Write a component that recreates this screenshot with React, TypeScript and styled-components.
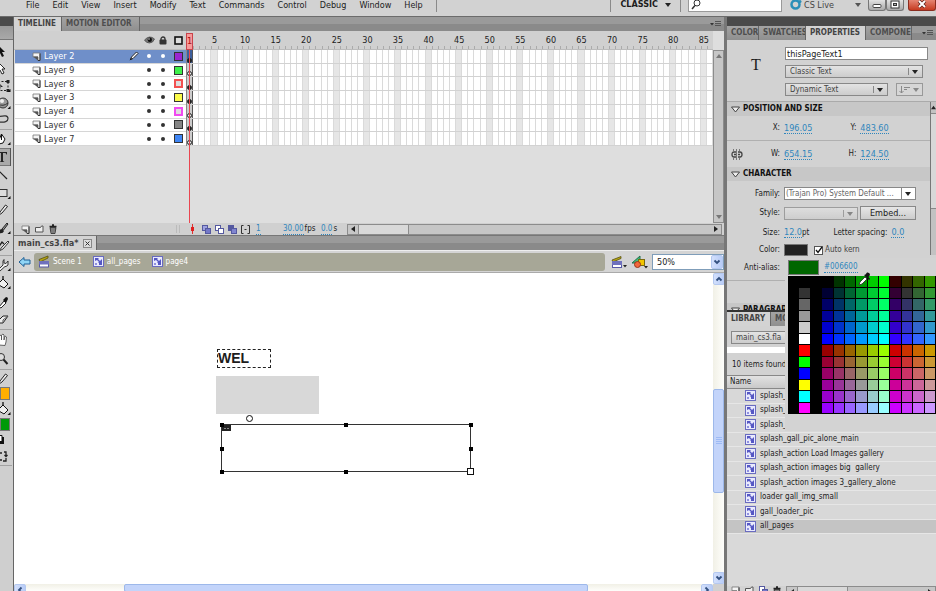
import React from "react";
import styled, { createGlobalStyle, css } from "styled-components";

const Global = createGlobalStyle`
  * { box-sizing: border-box; }
  body { margin: 0; overflow: hidden; background: #d0d0d0; }
  body, button, input, select, table {
    font: 9px/12px "DejaVu Sans Condensed", "DejaVu Sans", sans-serif;
    color: #1c1c1c;
  }
  button { padding: 0; border: 0; background: none; }
  svg { display: block; flex: none; }
`;

const Shell = styled.div`
  height: 100vh;
  display: flex;
  flex-direction: column;
  overflow: hidden;
  background: #d0d0d0;
`;

/* ---------- menu bar ---------- */
const MenuBar = styled.header`
  display: flex;
  flex: none;
  height: 17px;
  padding-left: 26px;
  background: #d2d2d2;
  border-bottom: 1px solid #6c6c6c;
  align-items: flex-start;
`;
const MenuItems = styled.nav`
  display: flex;
  flex: 1;
  gap: 13px;
`;
const MenuItem = styled.button`
  line-height: 11px;
  height: 11px;
`;
const Divider = styled.span`
  width: 1px;
  height: 12px;
  background: #8a8a8a;
`;
const Workspace = styled.button`
  display: flex;
  align-items: center;
  gap: 7px;
  height: 9px;
  padding: 0 9px;
  font-weight: bold;
  line-height: 9px;
`;
const SearchBox = styled.label`
  display: flex;
  width: 94px;
  height: 12px;
  margin: 0 8px 0 7px;
  padding-left: 2px;
  background: #fff;
  border: 1px solid #9a9a9a;
  border-top: 0;
  input { min-width: 0; flex: 1; border: 0; outline: 0; background: none; padding: 0; }
`;
const CsLive = styled.button`
  display: flex;
  align-items: center;
  gap: 2px;
  height: 10px;
  width: 78px;
  line-height: 10px;
  color: #444;
  svg:last-child { margin-left: auto; margin-right: 7px; }
`;
const WindowButtons = styled.div`
  display: flex;
`;
const WindowButton = styled.button<{ $close?: boolean }>`
  width: ${(p) => (p.$close ? 28 : 18)}px;
  height: 11px;
  display: flex;
  justify-content: center;
  border: 1px solid ${(p) => (p.$close ? "#8b2d20" : "#777")};
  border-top: 0;
  border-radius: 0 0 3px 3px;
  background: ${(p) => (p.$close ? "linear-gradient(#e58573, #c63a20)" : "linear-gradient(#e2e2e2, #a9a9a9)")};
  margin-left: ${(p) => (p.$close ? 4 : 0)}px;
`;

/* ---------- page columns ---------- */
const Columns = styled.div`
  flex: 1;
  min-height: 0;
  display: grid;
  grid-template-columns: 13px minmax(0, 1fr) 210px;
`;

const ToolStrip = styled.aside`
  background: #cfcfcf;
  overflow: hidden;
`;
const StripTop = styled.div`
  height: 26px;
  background: linear-gradient(#4a4a4a 0 9px, #999 9px 10px, #a9a9a9 22px, #777 22px 23px, #cfcfcf 23px);
`;
const ToolGroup = styled.div<{ $h: number }>`
  height: ${(p) => p.$h}px;
  display: flex;
  flex-direction: column;
  border-bottom: 1px solid #a2a2a2;
  margin-right: 1px;
`;
const Tool = styled.button<{ $on?: boolean }>`
  flex: 1;
  min-height: 0;
  width: 11px;
  display: flex;
  align-items: center;
  ${(p) => p.$on && css`background: #a9a9a9; box-shadow: inset -1px 0 #555, inset 0 1px #777, inset 0 -1px #777;`}
`;
const Swatch = styled.button<{ $c: string; $w?: number; $h?: number }>`
  flex: none;
  width: ${(p) => p.$w ?? 10}px;
  height: ${(p) => p.$h ?? 13}px;
  background: ${(p) => p.$c};
  border: 1px solid #777;
`;

const Center = styled.main`
  display: flex;
  flex-direction: column;
  min-width: 0;
  min-height: 0;
  border-left: 1px solid #666;
  border-right: 2px solid #777;
`;

const TabBar = styled.div`
  display: flex;
  flex: none;
  height: 14px;
  background: linear-gradient(#9a9a9a 0 50%, #8a8a8a 50%);
  overflow: hidden;
`;
const Tab = styled.button<{ $on?: boolean; $w?: number; $doc?: boolean }>`
  flex: none;
  ${(p) => p.$w && css`width: ${p.$w}px;`}
  padding: 0 4px;
  overflow: hidden;
  white-space: nowrap;
  text-align: left;
  font-size: ${(p) => (p.$doc ? 9 : 8)}px;
  font-weight: bold;
  color: ${(p) => (p.$on ? "#444" : "#4e4e4e")};
  background: ${(p) => (p.$on ? "#d3d3d3" : "linear-gradient(#a3a3a3, #8f8f8f)")};
  border-right: 1px solid #666;
  display: ${(p) => (p.$doc ? "flex" : "block")};
  align-items: center;
  gap: 4px;
`;
const TabMenu = styled.button`
  margin-left: auto;
  width: 14px;
  display: flex;
  align-items: center;
`;

/* ---------- timeline ---------- */
const Timeline = styled.section`
  position: relative;
  flex: none;
  height: 192px;
  display: grid;
  grid-template: 19px 173px / 172px minmax(0, 1fr) 11px;
  background: #dedede;
`;
const layerColumns = css`
  display: grid;
  grid-template-columns: 13px 1fr 16px 14px 14px 16px;
  align-items: center;
  padding-left: 17px;
`;
const LayerHead = styled.div`
  ${layerColumns}
  background: #d0d0d0;
  border-bottom: 1px solid #bbb;
  svg { justify-self: center; }
`;
const LayerList = styled.div`
  display: grid;
  grid-template-rows: repeat(7, minmax(0, 1fr));
  height: 96px;
  margin-left: 1px;
  background: #fff;
`;
const LayerRow = styled.div<{ $on?: boolean }>`
  ${layerColumns}
  padding-left: 15px;
  border-bottom: 1px solid #d6d6d6;
  background: ${(p) => (p.$on ? "#6f8fc9" : "#fff")};
  color: ${(p) => (p.$on ? "#fff" : "#333")};
  > * { justify-self: center; }
  > :nth-child(2) { justify-self: start; line-height: 10px; padding-left: 1px; }
`;
const Dot = styled.i`
  width: 4px;
  height: 4px;
  border-radius: 50%;
  background: currentColor;
`;
const LayerColor = styled.button<{ $c: string; $outline?: boolean }>`
  width: 9px;
  height: 9px;
  border: ${(p) => (p.$outline ? `2px solid ${p.$c}` : "1px solid #333")};
  background: ${(p) => (p.$outline ? "#ddd" : p.$c)};
`;
const Ruler = styled.div`
  display: grid;
  grid-template-columns: repeat(86, minmax(0, 1fr));
  background: #d0d0d0;
  border-bottom: 1px solid #bbb;
  border-left: 1px solid #bbb;
  span {
    display: flex;
    justify-content: center;
    white-space: nowrap;
    line-height: 18px;
    background: linear-gradient(#aaa, #aaa) left bottom / 1px 3px no-repeat;
  }
`;
const Frames = styled.div`
  display: grid;
  grid-template-rows: repeat(7, minmax(0, 1fr));
  height: 96px;
  border-left: 1px solid #888;
`;
const FrameRow = styled.div`
  display: grid;
  grid-template-columns: repeat(86, minmax(0, 1fr));
  border-bottom: 1px solid #d2d2d2;
`;
const Frame = styled.i<{ $shade?: boolean; $key?: boolean; $sel?: boolean }>`
  display: flex;
  flex-direction: column;
  align-items: center;
  justify-content: flex-end;
  background: ${(p) => (p.$sel ? "#3e5f9c" : p.$key ? "#ccc" : p.$shade ? "#e6e6e6" : "#fff")};
  border-right: 1px solid ${(p) => (p.$key ? "#555" : "#dadada")};
`;
const KeyDot = styled.b<{ $fill?: boolean }>`
  width: 5px;
  height: 5px;
  border-radius: 50%;
  border: 1px solid #222;
  background: ${(p) => (p.$fill ? "#222" : "#eee")};
`;
const Playhead = styled.div`
  position: absolute;
  left: 172px;
  top: 2px;
  bottom: 0;
  width: 7px;
  display: flex;
  flex-direction: column;
  align-items: center;
  span {
    align-self: stretch;
    height: 17px;
    line-height: 14px;
    text-align: center;
    background: #f79a9a;
    border: 1px solid #c9434b;
    color: #a11;
  }
  i {
    flex: 1;
    width: 1px;
    background: #ea4650;
  }
`;
const GreyScroll = styled.div<{ $row?: boolean }>`
  display: flex;
  flex-direction: ${(p) => (p.$row ? "row" : "column")};
  justify-content: space-between;
  align-items: center;
  background: #c6c6c6;
  border: 1px solid #8c8c8c;
  button { display: flex; width: 10px; height: 10px; align-items: center; justify-content: center; }
`;
const GreyThumb = styled.div`
  width: 51px;
  height: 100%;
  margin-right: auto;
  background: #d9d9d9;
  border: solid #8c8c8c;
  border-width: 0 1px;
`;
const TimelineFoot = styled.div`
  flex: none;
  height: 13px;
  display: flex;
  align-items: center;
  padding: 0 2px 0 7px;
  font-size: 8px;
  background: #d0d0d0;
  border-bottom: 1px solid #777;
  ${GreyScroll} { flex: 1; height: 11px; }
`;
const FootGroup = styled.div<{ $w: number; $gap?: number }>`
  display: flex;
  align-items: center;
  flex: none;
  width: ${(p) => p.$w}px;
  gap: ${(p) => p.$gap ?? 5}px;
`;
const Hot = styled.a`
  color: #2f86bd;
  text-decoration: none;
  border-bottom: 1px dotted #2f86bd;
  line-height: 10px;
`;

/* ---------- document ---------- */
const EditBar = styled.div`
  flex: none;
  height: 23px;
  display: flex;
  align-items: center;
  gap: 3px;
  padding: 0 0 0 4px;
  background: #d4d4d4;
  border-top: 1px solid #eee;
  border-bottom: 1px solid #aaa;
`;
const Crumbs = styled.nav`
  flex: 1;
  height: 18px;
  display: flex;
  align-items: center;
  gap: 11px;
  padding-left: 4px;
  margin-right: 3px;
  border-radius: 3px;
  font-size: 8px;
  background: #a7a797;
`;
const Crumb = styled.a`
  display: flex;
  align-items: center;
  gap: 3px;
  color: #fff;
  text-decoration: none;
`;
const ZoomWrap = styled.div`
  position: relative;
  width: 72px;
  height: 16px;
  border: 1px solid #7f9db9;
  background: #fff;
  select { width: 100%; height: 14px; border: 0; padding: 0 4px; background: none; appearance: none; outline: 0; }
`;
const xpButton = css`
  display: flex;
  align-items: center;
  justify-content: center;
  background: linear-gradient(90deg, #d3e0fc, #b7cbf6);
  border: 1px solid #b4c8f0;
  border-radius: 2px;
`;
const ZoomArrow = styled.span`
  ${xpButton}
  position: absolute;
  right: 0;
  top: 0;
  width: 12px;
  height: 14px;
  pointer-events: none;
`;
const Stage = styled.div`
  flex: 1;
  min-height: 0;
  display: grid;
  grid-template: minmax(0, 1fr) 7px / minmax(0, 1fr) 11px;
`;
const Canvas = styled.div`
  position: relative;
  background: #fff;
  overflow: hidden;
`;
const TextBox = styled.div`
  position: absolute;
  left: 203px;
  top: 76px;
  width: 54px;
  height: 19px;
  border: 1px dashed #222;
  font: bold 14px/17px "Liberation Sans", sans-serif;
`;
const GreyBlock = styled.div`
  position: absolute;
  left: 202px;
  top: 103px;
  width: 103px;
  height: 38px;
  background: #d8d8d8;
`;
const Selection = styled.svg`
  position: absolute;
  left: 200px;
  top: 139px;
`;
const XpScroll = styled.div<{ $row?: boolean }>`
  display: flex;
  flex-direction: ${(p) => (p.$row ? "row" : "column")};
  background: linear-gradient(${(p) => (p.$row ? "180deg" : "90deg")}, #f1f0e6, #fefefb);
  overflow: hidden;
`;
const XpArrow = styled.button`
  ${xpButton}
  flex: none;
  width: 12px;
  height: 12px;
`;
const XpTrack = styled.div<{ $grow: number }>`
  flex: ${(p) => p.$grow};
`;
const XpThumb = styled.div<{ $grow: number }>`
  flex: ${(p) => p.$grow};
  min-height: 8px;
  background: #c3d4fa;
  border: 1px solid #9db8ea;
  border-radius: 2px;
  display: flex;
  align-items: center;
  justify-content: center;
`;

/* ---------- right panels ---------- */
const Right = styled.aside`
  position: relative;
  display: flex;
  flex-direction: column;
  min-height: 0;
  overflow: hidden;
  background: #d2d2d2;
  border-left: 1px solid #777;
`;
const DarkStrip = styled.div`
  flex: none;
  height: 9px;
  background: #4a4a4a;
`;
const Properties = styled.section`
  flex: none;
  height: 270px;
  display: flex;
  flex-direction: column;
  overflow: hidden;
`;
const Instance = styled.div`
  flex: none;
  height: 62px;
  display: flex;
  padding: 7px 8px 0 24px;
  border-bottom: 1px solid #aaa;
`;
const TypeMark = styled.span`
  width: 34px;
  padding-top: 10px;
  font: 16px/16px "Liberation Serif", serif;
`;
const Stack = styled.div`
  flex: 1;
  display: flex;
  flex-direction: column;
  gap: 5px;
`;
const Line = styled.div`
  display: flex;
  gap: 8px;
`;
const Field = styled.input`
  width: 100%;
  height: 13px;
  padding: 0 1px;
  border: 1px solid #888;
  background: #fff;
  outline: 0;
`;
const SelectBox = styled.span<{ $w: number; $white?: boolean; $dim?: boolean }>`
  position: relative;
  display: block;
  flex: none;
  width: ${(p) => p.$w}px;
  height: 13px;
  border: 1px solid #888;
  background: ${(p) => (p.$white ? "#fff" : "linear-gradient(#e3e3e3, #cccccc)")};
  opacity: ${(p) => (p.$dim ? 0.7 : 1)};
  select {
    display: block;
    width: 100%;
    height: 11px;
    padding: 0 13px 0 4px;
    border: 0;
    outline: 0;
    background: none;
    appearance: none;
    font-size: 8px;
    line-height: 11px;
    color: #444;
    ${(p) => p.$white && css`padding-left: 1px; color: #666;`}
  }
  svg {
    position: absolute;
    right: 4px;
    top: 3px;
    pointer-events: none;
  }
  &::after {
    content: "";
    position: absolute;
    right: 13px;
    top: ${(p) => (p.$white ? 0 : 2)}px;
    bottom: ${(p) => (p.$white ? 0 : 2)}px;
    border-left: 1px solid #888;
  }
`;
const Orientation = styled.button`
  display: flex;
  align-items: center;
  justify-content: space-between;
  width: 27px;
  height: 13px;
  padding: 0 3px 0 2px;
  border: 1px solid #999;
  background: #d6d6d6;
`;
const Scroller = styled.div`
  flex: 1;
  min-height: 0;
  display: grid;
  grid-template-columns: minmax(0, 1fr) 6px;
`;
const Sections = styled.div`
  display: flex;
  flex-direction: column;
  overflow: hidden;
  font-size: 8px;
  ${Hot} { font-size: 9px; }
`;
const SectionHead = styled.button`
  flex: none;
  height: 14px;
  display: flex;
  align-items: center;
  gap: 3px;
  padding-left: 4px;
  background: #c7c7c7;
  font-size: 8px;
  font-weight: bold;
  color: #111;
`;
const Row = styled.div<{ $h: number; $line?: boolean }>`
  flex: none;
  height: ${(p) => p.$h}px;
  display: flex;
  align-items: center;
  border-bottom: ${(p) => (p.$line ? 1 : 0)}px solid #b0b0b0;
`;
const Label = styled.label<{ $w: number }>`
  width: ${(p) => p.$w}px;
  flex: none;
  display: flex;
  justify-content: flex-end;
  align-items: center;
  padding-right: 4px;
  white-space: nowrap;
  svg { margin: 0 auto 0 4px; }
`;
const Embed = styled.button`
  width: 56px;
  height: 14px;
  margin-left: 2px;
  border: 1px solid #888;
  background: linear-gradient(#e6e6e6, #ccc);
`;
const Check = styled.label`
  display: flex;
  align-items: center;
  gap: 2px;
  margin-left: 6px;
  position: relative;
  input {
    appearance: none;
    width: 9px;
    height: 9px;
    margin: 0;
    border: 1px solid #555;
    background: #fff;
  }
  span { color: #444; }
  svg { position: absolute; left: 1px; top: 2px; }
`;
const SideScroll = styled.div`
  height: 153px;
  border-left: 1px solid #777;
  display: flex;
  flex-direction: column;
  align-items: center;
  background: #c2c2c2;
  button { height: 11px; display: flex; align-items: center; }
  div { width: 100%; height: 96px; background: #d8d8d8; border: solid #888; border-width: 1px 0; }
`;
const Library = styled.section`
  flex: 1;
  min-height: 0;
  display: flex;
  flex-direction: column;
  overflow: hidden;
  border-top: 2px solid #333;
  background: #d9d9d9;
`;
const LibTop = styled.div`
  flex: none;
  padding: 5px 0 0 4px;
  height: 21px;
  background: #d2d2d2;
`;
const LibSearch = styled.input`
  flex: none;
  height: 6px;
  border: 0;
  padding: 0;
  background: #fff;
  outline: 0;
`;
const Count = styled.div`
  flex: none;
  height: 22px;
  padding: 6px 5px;
  font-size: 8px;
  background: #d2d2d2;
`;
const Items = styled.table`
  flex: none;
  height: 159px;
  width: 100%;
  display: grid;
  grid-template-rows: 14px 145px;
  font-size: 8px;
  thead, thead tr { display: grid; }
  th {
    text-align: left;
    font-weight: normal;
    padding: 0 3px;
    background: linear-gradient(#e2e2e2, #c9c9c9);
    border: solid #888;
    border-width: 1px 0;
  }
  tbody { display: grid; grid-template-rows: repeat(10, minmax(0, 1fr)); }
`;
const Item = styled.tr<{ $on?: boolean }>`
  display: grid;
  background: ${(p) => (p.$on ? "#c4c4c4" : "#d8d8d8")};
  border-bottom: 1px solid #e6e6e6;
  td {
    display: flex;
    align-items: center;
    gap: 4px;
    padding: 0 0 0 18px;
    white-space: pre;
  }
`;
const LibFoot = styled.div`
  margin-top: auto;
  height: 5px;
  flex: none;
  display: flex;
  gap: 5px;
  padding-left: 4px;
  background: #d2d2d2;
  overflow: hidden;
  ${GreyScroll} { flex: 1; height: 11px; }
`;

const Popup = styled.div`
  position: absolute;
  right: 0;
  top: 241px;
  width: 151px;
  height: 173px;
  padding: 1px 0 0 3px;
  background: #d3d3d3;
`;
const PopupHead = styled.div`
  display: flex;
  align-items: center;
  gap: 5px;
  height: 17px;
  font-size: 8px;
`;
const Palette = styled.div`
  display: grid;
  grid-template-columns: repeat(13, minmax(0, 1fr));
  grid-template-rows: repeat(12, minmax(0, 1fr));
  height: 138px;
  background: #000;
`;
const Chip = styled.button<{ $c: string }>`
  background: ${(p) => p.$c};
  border: solid #000;
  border-width: 0 1px 1px 0;
`;
const Dropper = styled.svg`
  position: absolute;
  left: 72px;
  top: 13px;
`;

/* ---------- drawings ---------- */
const Tri = ({ c = "#222", d = "down", s = 6 }: { c?: string; d?: "down" | "up" | "left" | "right"; s?: number }) => {
  const pts = { down: "0,1 6,1 3,5", up: "0,5 6,5 3,1", left: "5,0 5,6 1,3", right: "1,0 1,6 5,3" }[d];
  return <svg width={s} height={s} viewBox="0 0 6 6"><polygon points={pts} fill={c} /></svg>;
};
const Chevron = ({ d = "M1.5 2.5 4 5 6.5 2.5" }: { d?: string }) => (
  <svg width="8" height="8" viewBox="0 0 8 8"><path d={d} fill="none" stroke="#33507f" strokeWidth="1.8" /></svg>
);
const UP = "M1.5 5.5 4 3 6.5 5.5";
const LEFT = "M5.5 1.5 3 4 5.5 6.5";
const RIGHT = "M2.5 1.5 5 4 2.5 6.5";
const MenuLines = () => (
  <svg width="12" height="8" viewBox="0 0 12 8"><path d="M0 3h4L2 5.500z" fill="#333" /><path d="M5 1.500h6M5 3.500h6M5 5.500h6" stroke="#555" /></svg>
);
const Twisty = () => (
  <svg width="9" height="7" viewBox="0 0 9 7"><path d="M.5 1h8L4.500 6z" fill="#eee" stroke="#444" /></svg>
);
const Clip = () => (
  <svg width="11" height="11" viewBox="0 0 11 11">
    <rect x=".5" y=".5" width="10" height="10" fill="#e9eafd" stroke="#6a6cc0" />
    <path d="M2 2h4l-1 1 2 2 2-2v4H5l1-1-2-2-2 1z" fill="#5557c4" />
    <rect x="6" y="7" width="3" height="2" fill="#5557c4" /><rect x="2" y="7" width="2" height="2" fill="#8f91e0" />
  </svg>
);
const Clapper = () => (
  <svg width="12" height="13" viewBox="0 0 12 13">
    <path d="M1 4.500 10 1v2L2 7z" fill="#b5a512" stroke="#574f10" strokeWidth=".8" />
    <rect x="1.500" y="6.500" width="9" height="5.500" fill="#fff" stroke="#5759a8" />
    <path d="M1 6h10v3.500H1z" fill="#6f71bd" />
  </svg>
);
const LayerIcon = () => (
  <svg width="9" height="9" viewBox="0 0 9 9">
    <path d="M1 1h7v7.500H6V5H1z" fill="#f4f4f4" stroke="#777" strokeWidth=".8" />
    <path d="M1 4.500h5v4z" fill="#555" />
    <path d="M8 1.500v7H6" fill="none" stroke="#333" />
  </svg>
);
const PencilIcon = () => (
  <svg width="10" height="10" viewBox="0 0 10 10"><path d="M1.500 8.500 2.500 6 7.500 1 9 2.500 4 7.500z" fill="#fff" stroke="#222" /><path d="M.5 9.500 3 8 2 7z" fill="#111" /></svg>
);
const Eye = () => (
  <svg width="11" height="8" viewBox="0 0 11 8"><path d="M.5 4Q5.500-1.500 10.500 3 9 7 5.500 7T.5 4z" fill="#777" stroke="#444" strokeWidth=".7" /><circle cx="5.800" cy="3.800" r="2.200" fill="#111" /><circle cx="5" cy="3" r=".7" fill="#fff" /></svg>
);
const Lock = () => (
  <svg width="8" height="9" viewBox="0 0 8 9"><path d="M2 4V3a2 2 0 0 1 4 0v1" fill="none" stroke="#333" strokeWidth="1.300" /><rect x=".5" y="3.500" width="7" height="5" rx="1" fill="#333" /></svg>
);
const Box = () => <svg width="9" height="9" viewBox="0 0 9 9"><rect x="1" y="1" width="7" height="7" fill="#ddd" stroke="#111" strokeWidth="1.600" /></svg>;
const Onion = ({ a, b }: { a: string; b: string }) => (
  <svg width="9" height="9" viewBox="0 0 9 9"><rect x=".5" y=".5" width="5" height="5" fill={a} stroke="#5559a0" /><rect x="3.500" y="3.500" width="5" height="5" fill={b} stroke="#5559a0" /></svg>
);
const Trash = () => (
  <svg width="8" height="10" viewBox="0 0 8 10"><path d="M.5 2.500h7M3 1h2" stroke="#222" strokeWidth="1.400" /><path d="M1 3.500h6L6 9.500H2z" fill="#555" stroke="#222" strokeWidth=".7" /><path d="M3 4v5M5 4v5" stroke="#ddd" strokeWidth=".6" /></svg>
);
const Folder = () => <svg width="9" height="8" viewBox="0 0 9 8"><path d="M.5 7V2.500h5l1-1.500H8V7z" fill="#eee" stroke="#555" /></svg>;

const toolArt: Record<string, React.ReactNode> = {
  arrow: <path d="M-2 1 5 8H2l2 4-2 1-2-4-2 2z" fill="#111" />,
  subarrow: <path d="M-2 1 5 8H2l2 4-2 1-2-4-2 2z" fill="#fff" stroke="#111" strokeWidth=".9" />,
  transform: <><path d="M-2 3.500H8v9H-2" fill="none" stroke="#222" strokeDasharray="2 1.500" /><path d="M6.500 2h3v3h-3zM6.500 11h3v3h-3zM0 6l3 3H1v3" fill="#222" /></>,
  sphere: <><circle cx="3" cy="8" r="5" fill="#999" stroke="#333" /><circle cx="2" cy="6" r="2" fill="#eee" /><path d="M-2 9q5 3 10-1" stroke="#333" fill="none" /></>,
  lasso: <path d="M-2 5Q8 2 8 6.500T-1 10l-1 3" fill="none" stroke="#333" strokeWidth="1.200" />,
  pen: <><path d="M-1 13V9l2.500-6L5 8l-2 4z" fill="#fff" stroke="#111" /><path d="M1.500 3v6" stroke="#111" /></>,
  line: <path d="M-2 3 7 12" stroke="#222" strokeWidth="1.200" />,
  rect: <rect x="-2" y="4.500" width="9" height="7" fill="#ddd" stroke="#333" />,
  pencil: <path d="M-1 13 0 10 5.500 3 7.500 4.500 2 11z" fill="#eee" stroke="#222" />,
  brush: <><path d="M2 9 7 3l1 1-4.500 6z" fill="#999" stroke="#222" /><path d="M-1 13q0-4 3-4l2 2q-1 3-5 2z" fill="#222" /></>,
  deco: <><path d="M-1 13 2 9 8 3l1 1-6 7z" fill="#eee" stroke="#222" strokeWidth=".9" /><path d="M-2 5l2 2 2-3 2 2" stroke="#222" fill="none" strokeWidth="1.400" /></>,
  bone: <path d="M-2 13 3 8V4l1-1.500V6l2 .5L8 4v4L6 9.500H5L0 14z" fill="#eee" stroke="#333" />,
  bucket: <><path d="M-1 8 3 4l5 5-4 4-5-3z" fill="#eee" stroke="#111" /><path d="M3 4V1M-2 8v5" stroke="#111" strokeWidth="1.300" /></>,
  dropper: <><path d="M-1 13 4 7l2 2-5 5z" fill="#fff" stroke="#222" /><path d="m3 6 3-3q2 0 2 2L6 9z" fill="#111" /></>,
  eraser: <><path d="M-2 9 3 4h5L3 11h-5z" fill="#eee" stroke="#222" /><path d="M3 11v-3l5-4" fill="none" stroke="#555" /></>,
  hand: <path d="M-1 13V5l1-2 1.500 1V8 3l1.500-1 1 1v5l1-4 1.500 1L6 10l-1 3.500z" fill="#fff" stroke="#555" strokeWidth=".9" />,
  zoom: <><circle cx="1" cy="6" r="3.500" fill="#ddd" stroke="#333" /><path d="m3.500 8.500 4 4.500" stroke="#222" strokeWidth="2" /></>,
  bw: <><path d="M-1 6h5v7h-5z" fill="#111" /><path d="M-2 4.500h4v6h-4z" fill="#fff" stroke="#111" /></>,
  swap: <path d="M-1 5h3M-1 9v3h3M4 4h2v4M6 10v3H3M4.500 7 6 8.500 7.500 7" fill="none" stroke="#222" strokeWidth="1.300" />,
};
const flyout = ["sphere", "transform", "pen", "rect", "brush", "bone", "bucket"];
const ToolButton = ({ id }: { id: string }) => (
  <Tool aria-label={id} $on={id === "type"}>
    <svg width="11" height="16" viewBox="0 0 11 16">
      {id === "type" ? <path d="M-3 3H7v3L5.500 4H3v8l1.500 1h-5L1 12V4h-2z" fill="#222" /> : toolArt[id]}
      {flyout.includes(id) && <path d="M10.500 11v3h-3z" fill="#111" />}
    </svg>
  </Tool>
);

/* ---------- data ---------- */
const menus = ["File", "Edit", "View", "Insert", "Modify", "Text", "Commands", "Control", "Debug", "Window", "Help"];
const layers = [
  { name: "Layer 2", color: "#9a26d0", fill: true, on: true },
  { name: "Layer 9", color: "#3df04a", fill: false },
  { name: "Layer 8", color: "#f25050", fill: true, outline: true },
  { name: "Layer 3", color: "#fbfb4a", fill: true },
  { name: "Layer 4", color: "#f04af0", fill: false, outline: true },
  { name: "Layer 6", color: "#858585", fill: true },
  { name: "Layer 7", color: "#3f86f5", fill: false },
];
const frames = Array.from({ length: 86 }, (_, i) => i + 1);
const items = [
  "splash_", "splash_", "splash_", "splash_gall_pic_alone_main", "splash_action Load Images gallery",
  "splash_action images big  gallery", "splash_action images 3_gallery_alone", "loader gall_img_small",
  "gall_loader_pic", "all_pages",
];
const greys = ["#000000", "#333333", "#666666", "#999999", "#cccccc", "#ffffff", "#ff0000", "#00ff00", "#0000ff", "#ffff00", "#00ffff", "#ff00ff"];
const steps = ["00", "33", "66", "99", "cc", "ff"];
const chips = greys.flatMap((grey, r) => [
  "#000000", grey, "#000000",
  ...Array.from({ length: 10 }, (_, c) => `#${steps[(r > 5 ? 3 : 0) + (c > 5 ? 1 : 0)]}${steps[c % 6]}${steps[r % 6]}`),
]);

const Drop = ({ label, value, w, white, dim }: { label: string; value: string; w: number; white?: boolean; dim?: boolean }) => (
  <SelectBox $w={w} $white={white} $dim={dim}>
    <select aria-label={label} defaultValue={value}><option>{value}</option></select>
    <Tri c={dim ? "#666" : "#222"} />
  </SelectBox>
);

export default function App() {
  return (
    <Shell>
      <Global />
      <MenuBar>
        <MenuItems>
          {menus.map((m) => <MenuItem key={m}>{m}</MenuItem>)}
          <Divider />
        </MenuItems>
        <Divider />
        <Workspace>CLASSIC <Tri /></Workspace>
        <Divider />
        <SearchBox>
          <svg width="10" height="10" viewBox="0 0 10 10"><circle cx="6" cy="3" r="3" fill="none" stroke="#333" /><path d="M4 5.500 1 9" stroke="#333" strokeWidth="1.500" /></svg>
          <input aria-label="Search" />
        </SearchBox>
        <CsLive>
          <svg width="12" height="11" viewBox="0 0 12 11"><circle cx="5.500" cy="4.500" r="4" fill="none" stroke="#2b8fb8" strokeWidth="2.500" /><circle cx="10" cy="1.500" r="1.500" fill="#2b8fb8" /></svg>
          CS Live
          <Tri c="#555" />
        </CsLive>
        <WindowButtons>
          <WindowButton aria-label="Minimize"><svg width="10" height="10" viewBox="0 0 10 10"><rect x="1" y="4.500" width="8" height="3" rx="1" fill="#fff" stroke="#444" /></svg></WindowButton>
          <WindowButton aria-label="Restore"><svg width="10" height="10" viewBox="0 0 10 10"><rect x="1" y="1" width="8" height="7" fill="#fff" stroke="#333" /><rect x="3.500" y="3.500" width="3" height="2" fill="#aaa" stroke="#333" /></svg></WindowButton>
          <WindowButton $close aria-label="Close"><svg width="10" height="10" viewBox="0 0 10 10"><path d="m2 1 6 6M8 1 2 7" stroke="#5d2018" strokeWidth="3.500" /><path d="m2 1 6 6M8 1 2 7" stroke="#fff" strokeWidth="2" /></svg></WindowButton>
        </WindowButtons>
      </MenuBar>

      <Columns>
        <ToolStrip>
          <StripTop />
          <ToolGroup $h={87}>{["arrow", "subarrow", "transform", "sphere", "lasso"].map((t) => <ToolButton key={t} id={t} />)}</ToolGroup>
          <ToolGroup $h={126}>{["pen", "type", "line", "rect", "pencil", "brush", "deco"].map((t) => <ToolButton key={t} id={t} />)}</ToolGroup>
          <ToolGroup $h={74}>{["bone", "bucket", "dropper", "eraser"].map((t) => <ToolButton key={t} id={t} />)}</ToolGroup>
          <ToolGroup $h={40}>{["hand", "zoom"].map((t) => <ToolButton key={t} id={t} />)}</ToolGroup>
          <ToolGroup $h={96}>
            <ToolButton id="pencil" />
            <Swatch $c="#ffae00" aria-label="Stroke color" />
            <ToolButton id="bucket" />
            <Swatch $c="#009a08" aria-label="Fill color" />
            <ToolButton id="bw" />
            <ToolButton id="swap" />
          </ToolGroup>
        </ToolStrip>

        <Center>
          <TabBar>
            <Tab $on $w={48}>TIMELINE</Tab>
            <Tab $w={78}>MOTION EDITOR</Tab>
            <TabMenu aria-label="Panel menu"><MenuLines /></TabMenu>
          </TabBar>
          <Timeline>
            <LayerHead><i /><i /><i /><Eye /><Lock /><Box /></LayerHead>
            <Ruler>{frames.map((f) => <span key={f}>{f % 5 === 0 ? f : ""}</span>)}</Ruler>
            <i />
            <LayerList>
              {layers.map((l) => (
                <LayerRow key={l.name} $on={l.on}>
                  <LayerIcon />
                  <span>{l.name}</span>
                  {l.on ? <PencilIcon /> : <i />}
                  <Dot /><Dot />
                  <LayerColor $c={l.color} $outline={l.outline} aria-label={`${l.name} outline`} />
                </LayerRow>
              ))}
            </LayerList>
            <Frames>
              {layers.map((l) => (
                <FrameRow key={l.name}>
                  {frames.map((f) => (
                    <Frame key={f} $shade={f % 5 === 0} $key={f === 1} $sel={f === 1 && l.on}>
                      {f === 1 && <KeyDot $fill={l.fill} />}
                    </Frame>
                  ))}
                </FrameRow>
              ))}
            </Frames>
            <GreyScroll>
              <button aria-label="Scroll up"><Tri d="up" c="#777" /></button>
              <button aria-label="Scroll down"><Tri c="#777" /></button>
            </GreyScroll>
            <Playhead><span>1</span><i /></Playhead>
          </Timeline>
          <TimelineFoot>
            <FootGroup $w={154}><LayerIcon /><Folder /><Trash /></FootGroup>
            <FootGroup $w={15}><svg width="6" height="8" viewBox="0 0 6 8"><path d="M1.500 0v8M4.500 0v8" stroke="#bbb" /></svg></FootGroup>
            <FootGroup $w={12}><svg width="5" height="10" viewBox="0 0 5 10"><path d="M2.500 0v10" stroke="#e03030" /><rect x="1" y="3" width="3" height="4" fill="#e02020" /></svg></FootGroup>
            <FootGroup $w={54} $gap={4}>
              <Onion a="#9ea2e0" b="#7478c8" /><Onion a="#fff" b="#fff" /><Onion a="#5559a0" b="#8085d0" />
              <svg width="9" height="9" viewBox="0 0 9 9"><path d="M2.500.5h-2v8h2M6.500.5h2v8h-2M3.500 4.500h2" fill="none" stroke="#333" /></svg>
            </FootGroup>
            <FootGroup $w={27}><Hot href="#frame">1</Hot></FootGroup>
            <FootGroup $w={38} $gap={1}><Hot href="#fps">30.00</Hot>fps</FootGroup>
            <FootGroup $w={26} $gap={1}><Hot href="#time">0.0</Hot>s</FootGroup>
            <GreyScroll $row>
              <button aria-label="Scroll left"><Tri d="left" /></button>
              <GreyThumb />
              <button aria-label="Scroll right"><Tri d="right" /></button>
            </GreyScroll>
          </TimelineFoot>

          <TabBar>
            <Tab as="div" $on $doc $w={83}>
              <span>main_cs3.fla*</span>
              <button aria-label="Close document"><svg width="9" height="9" viewBox="0 0 9 9"><rect x=".5" y=".5" width="8" height="8" fill="#ddd" stroke="#888" /><path d="m2.500 2.500 4 4m0-4-4 4" stroke="#333" /></svg></button>
            </Tab>
          </TabBar>
          <EditBar>
            <button aria-label="Back"><svg width="13" height="12" viewBox="0 0 13 12"><path d="M1 6l5-4.500V4h6v4H6v2.500z" fill="#8fd4f5" stroke="#1f5f95" /></svg></button>
            <Crumbs>
              <Crumb href="#scene"><Clapper />Scene 1</Crumb>
              <Crumb href="#all_pages"><Clip />all_pages</Crumb>
              <Crumb href="#page4"><Clip />page4</Crumb>
            </Crumbs>
            <button aria-label="Edit scene"><svg width="17" height="14" viewBox="0 0 17 14"><path d="M1 5 10 1.500v2L2 7z" fill="#b5a512" stroke="#574f10" strokeWidth=".8" /><rect x="1.500" y="6.500" width="9" height="6" fill="#fff" stroke="#5759a8" /><path d="M1 6h10v4H1z" fill="#6f71bd" /><path d="M12 10h4l-2 2.500z" fill="#222" /></svg></button>
            <button aria-label="Edit symbols"><svg width="18" height="14" viewBox="0 0 18 14"><path d="M1 8 9 1v7z" fill="#3fbf7f" stroke="#24704c" /><rect x="7.500" y="4.500" width="6" height="6" fill="#f2c500" stroke="#7a6a10" /><circle cx="6.500" cy="9.500" r="3" fill="#f2683c" stroke="#98361a" /><path d="M13 11h4l-2 2.500z" fill="#222" /></svg></button>
            <ZoomWrap>
              <select aria-label="Zoom" defaultValue="50%"><option>50%</option></select>
              <ZoomArrow><Chevron /></ZoomArrow>
            </ZoomWrap>
          </EditBar>
          <Stage>
            <Canvas>
              <TextBox>WEL</TextBox>
              <GreyBlock />
              <Selection width="262" height="66" viewBox="0 0 262 66">
                <circle cx="35.500" cy="6.500" r="3" fill="#fff" stroke="#111" />
                <path d="M7.500 12.500h249v47H7.500z" fill="none" stroke="#333" />
                <rect x="8" y="13" width="9" height="6" fill="#222" />
                <path d="M10 16.500h6" stroke="#888" strokeDasharray="2 1" />
                {[[7, 12], [131, 12], [256, 12], [7, 36], [256, 36], [7, 59], [131, 59]].map(([x, y]) => (
                  <rect key={`${x}-${y}`} x={x - 1} y={y - 1} width="4" height="4" fill="#000" />
                ))}
                <rect x="253.500" y="56.500" width="6" height="6" fill="#fff" stroke="#111" />
              </Selection>
            </Canvas>
            <XpScroll>
              <XpArrow aria-label="Up"><Chevron d={UP} /></XpArrow>
              <XpTrack $grow={104} />
              <XpThumb $grow={103}><svg width="6" height="7" viewBox="0 0 6 7"><path d="M0 .5h6M0 2.500h6M0 4.500h6M0 6.500h6" stroke="#9dbaf5" /></svg></XpThumb>
              <XpTrack $grow={79} />
              <XpArrow aria-label="Down"><Chevron /></XpArrow>
            </XpScroll>
            <XpScroll $row>
              <XpArrow aria-label="Left"><Chevron d={LEFT} /></XpArrow>
              <XpTrack $grow={98} />
              <XpThumb $grow={464} />
              <XpTrack $grow={113} />
              <XpArrow aria-label="Right"><Chevron d={RIGHT} /></XpArrow>
            </XpScroll>
          </Stage>
        </Center>

        <Right>
          <DarkStrip />
          <TabBar>
            <Tab $w={32}>COLOR</Tab>
            <Tab $w={47}>SWATCHES</Tab>
            <Tab $on $w={60}>PROPERTIES</Tab>
            <Tab $w={46}>COMPONENTS</Tab>
            <TabMenu aria-label="Panel menu"><MenuLines /></TabMenu>
          </TabBar>
          <Properties>
            <Instance>
              <TypeMark>T</TypeMark>
              <Stack>
                <Field aria-label="Instance name" defaultValue="thisPageText1" />
                <Drop label="Text engine" value="Classic Text" w={138} />
                <Line>
                  <Drop label="Text type" value="Dynamic Text" w={103} />
                  <Orientation aria-label="Orientation">
                    <svg width="11" height="8" viewBox="0 0 11 8"><path d="M2.500 0v7M.5 5l2 2 2-2M5 1.500h6M5 3.500h3" fill="none" stroke="#888" /></svg>
                    <Tri c="#888" />
                  </Orientation>
                </Line>
              </Stack>
            </Instance>
            <Scroller>
              <Sections>
                <SectionHead><Twisty />POSITION AND SIZE</SectionHead>
                <Row $h={25} $line><Label $w={57}>X:</Label><Hot href="#x">196.05</Hot><Label $w={48}>Y:</Label><Hot href="#y">483.60</Hot></Row>
                <Row $h={26}>
                  <Label $w={57}>
                    <svg width="12" height="11" viewBox="0 0 12 11"><path d="M5 3H3Q1 3 1 5.500T3 8h2M7 3h2q2 0 2 2.500T9 8H7M3 5.500h2M7 5.500h2" fill="none" stroke="#444" strokeWidth="1.300" /><path d="M2.500 0v2M5.500 0v11M8.500 0v2M2.500 9v2M8.500 9v2" stroke="#777" /></svg>
                    W:
                  </Label>
                  <Hot href="#w">654.15</Hot><Label $w={48}>H:</Label><Hot href="#h">124.50</Hot>
                </Row>
                <SectionHead><Twisty />CHARACTER</SectionHead>
                <Row $h={25}><Label $w={57}>Family:</Label><Drop label="Family" value="(Trajan Pro) System Default ..." w={132} white /></Row>
                <Row $h={14}><Label $w={57}>Style:</Label><Drop label="Style" value="" w={74} dim /><Embed>Embed...</Embed></Row>
                <Row $h={25}><Label $w={57}>Size:</Label><Hot href="#size">12.0</Hot>pt<Label $w={82}>Letter spacing:</Label><Hot href="#spacing">0.0</Hot></Row>
                <Row $h={10}>
                  <Label $w={57}>Color:</Label>
                  <Swatch $c="#222" $w={24} $h={12} aria-label="Text color" />
                  <Check>
                    <input type="checkbox" defaultChecked />
                    <svg width="8" height="8" viewBox="0 0 8 8"><path d="m1 4 2 2.500L7 1" fill="none" stroke="#111" strokeWidth="1.300" /></svg>
                    <span>Auto kern</span>
                  </Check>
                </Row>
                <Row $h={26} $line><Label $w={57}>Anti-alias:</Label></Row>
                <Row $h={22} />
                <SectionHead><Twisty />PARAGRAPH</SectionHead>
              </Sections>
              <SideScroll><button aria-label="Up"><Tri d="up" s={5} /></button><div /></SideScroll>
            </Scroller>
          </Properties>
          <Library>
            <TabBar>
              <Tab $on $w={44}>LIBRARY</Tab>
              <Tab $w={80}>MOTION PRESETS</Tab>
            </TabBar>
            <LibTop><Drop label="Document" value="main_cs3.fla" w={150} /></LibTop>
            <LibSearch aria-label="Search library" />
            <Count>10 items found</Count>
            <Items>
              <thead><tr><th>Name</th></tr></thead>
              <tbody>
                {items.map((t, i) => <Item key={i} $on={i === 9}><td><Clip />{t}</td></Item>)}
              </tbody>
            </Items>
            <LibFoot>
              <LayerIcon /><Folder /><Onion a="#fff" b="#7478c8" /><Trash />
              <GreyScroll $row><button aria-label="Left"><Tri d="left" /></button><GreyThumb /><button aria-label="Right"><Tri d="right" /></button></GreyScroll>
            </LibFoot>
          </Library>
          <Popup>
            <PopupHead><Swatch $c="#006600" $w={31} $h={15} aria-label="Current color" /><Hot href="#hex">#006600</Hot></PopupHead>
            <Palette>{chips.map((c, i) => <Chip key={i} $c={c} aria-label={c} />)}</Palette>
            <Dropper width="14" height="16" viewBox="0 0 14 16">
              <path d="M2 14 3 11 8 6l2 2-5 5z" fill="#fff" stroke="#333" strokeWidth=".9" />
              <path d="m7 4 5 5 1-1-1.500-2 1.500-2q0-3-3-2.500L8.500 3.500z" fill="#111" />
            </Dropper>
          </Popup>
        </Right>
      </Columns>
    </Shell>
  );
}
